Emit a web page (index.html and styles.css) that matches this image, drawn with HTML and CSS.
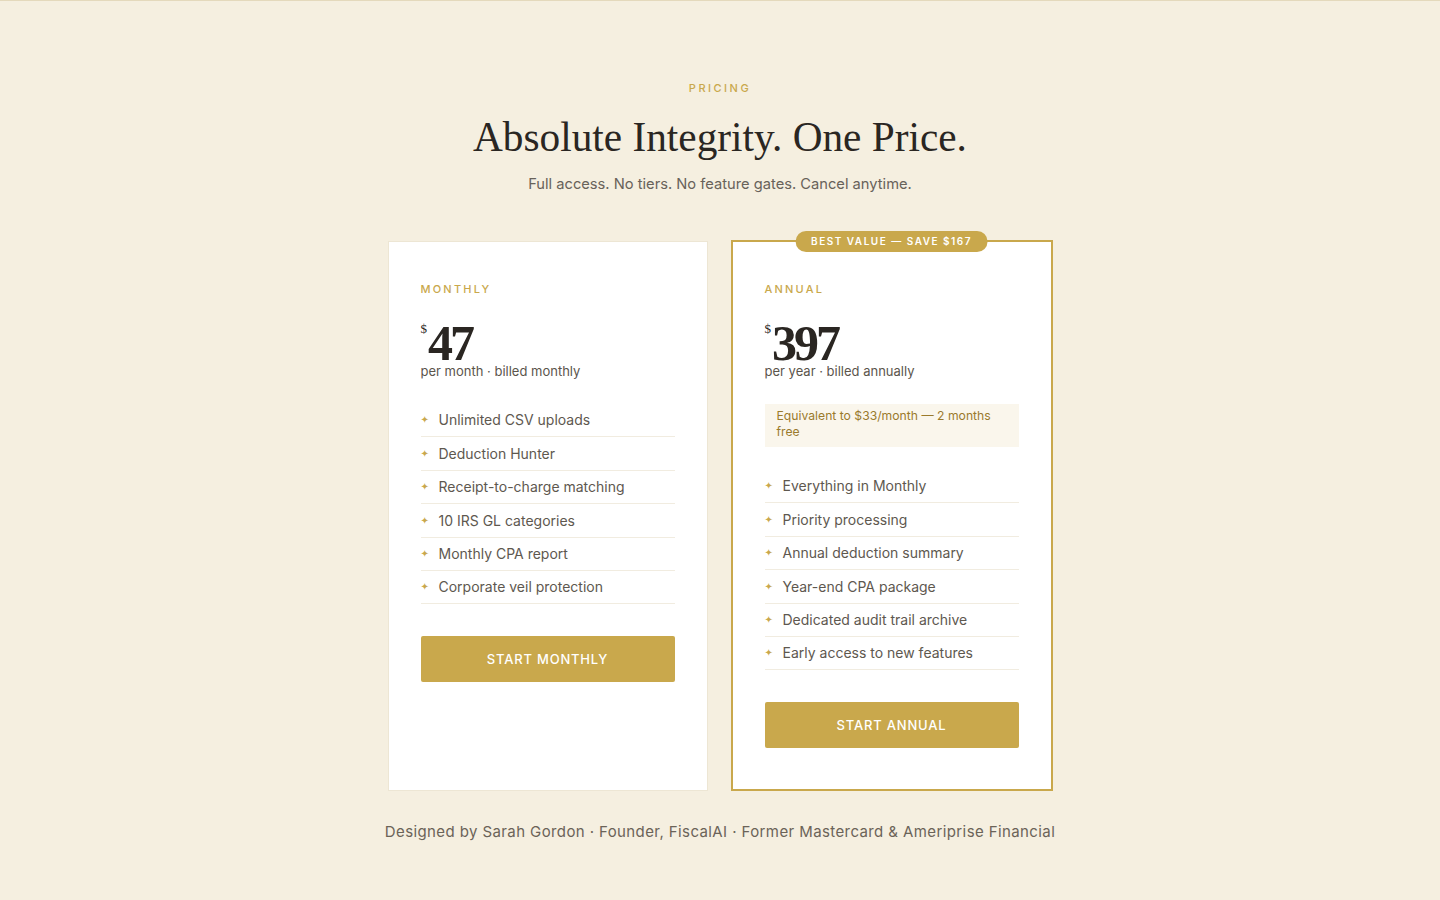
FILE: index.html
```html
<!DOCTYPE html>
<html lang="en">
<head>
<meta charset="utf-8">
<title>Pricing</title>
<link rel="stylesheet" href="styles.css">
</head>
<body>
<main class="pricing">
  <p class="eyebrow">PRICING</p>
  <h1 class="title">Absolute Integrity. One Price.</h1>
  <p class="subtitle">Full access. No tiers. No feature gates. Cancel anytime.</p>

  <div class="plans">
    <section class="card">
      <p class="plan-label">MONTHLY</p>
      <div class="price-block">
        <div class="price"><span class="currency">$</span><span class="amount">47</span></div>
        <p class="period">per month · billed monthly</p>
      </div>
      <ul class="features">
        <li><span class="plus">✦</span>Unlimited CSV uploads</li>
        <li><span class="plus">✦</span>Deduction Hunter</li>
        <li><span class="plus">✦</span>Receipt-to-charge matching</li>
        <li><span class="plus">✦</span>10 IRS GL categories</li>
        <li><span class="plus">✦</span>Monthly CPA report</li>
        <li><span class="plus">✦</span>Corporate veil protection</li>
      </ul>
      <a class="btn" href="#">START MONTHLY</a>
    </section>

    <section class="card card-featured">
      <span class="badge">BEST VALUE — SAVE $167</span>
      <p class="plan-label">ANNUAL</p>
      <div class="price-block">
        <div class="price"><span class="currency">$</span><span class="amount">397</span></div>
        <p class="period">per year · billed annually</p>
      </div>
      <p class="note">Equivalent to $33/month — 2 months free</p>
      <ul class="features">
        <li><span class="plus">✦</span>Everything in Monthly</li>
        <li><span class="plus">✦</span>Priority processing</li>
        <li><span class="plus">✦</span>Annual deduction summary</li>
        <li><span class="plus">✦</span>Year-end CPA package</li>
        <li><span class="plus">✦</span>Dedicated audit trail archive</li>
        <li><span class="plus">✦</span>Early access to new features</li>
      </ul>
      <a class="btn" href="#">START ANNUAL</a>
    </section>
  </div>

  <p class="credit">Designed by Sarah Gordon · Founder, FiscalAI · Former Mastercard &amp; Ameriprise Financial</p>
</main>
</body>
</html>
```

FILE: styles.css
```css
* { box-sizing: border-box; }

html, body {
  margin: 0;
  padding: 0;
}

body {
  background: #F5EFE0;
  border-top: 1px solid #E4D9BC;
  min-height: 900px;
  font-family: Inter, "Noto Sans", sans-serif;
  color: #5b554c;
}

.pricing {
  display: flex;
  flex-direction: column;
  align-items: center;
  padding-top: 79px;
}

.eyebrow {
  margin: 0;
  font-size: 11px;
  line-height: 16px;
  letter-spacing: 2.5px;
  color: #C9A84C;
  font-weight: 500;
}

.title {
  margin: 15px 0 0;
  font-family: "Liberation Serif", "DejaVu Serif", serif;
  font-weight: 400;
  font-size: 41.3px;
  line-height: 52px;
  color: #2A2622;
}

.subtitle {
  margin: 10px 0 0;
  font-size: 14.7px;
  line-height: 22px;
  color: #68625a;
}

.plans {
  display: grid;
  grid-template-columns: 320px 322px;
  gap: 23px;
  margin-top: 45px;
  align-items: stretch;
}

.card {
  position: relative;
  display: flex;
  flex-direction: column;
  background: #FFFFFF;
  border: 1px solid #EDE6D4;
  padding: 39px 32px 41px;
  margin-top: 1px;
}

.card-featured {
  border: 2px solid #C9A84C;
  margin-top: 0;
}

.badge {
  position: absolute;
  top: -11px;
  left: 50%;
  transform: translateX(-50%);
  white-space: nowrap;
  background: #C9A84C;
  color: #FFFFFF;
  font-size: 10px;
  font-weight: 600;
  letter-spacing: 1.5px;
  line-height: 21px;
  padding: 0 16px;
  border-radius: 11px;
}

.plan-label {
  margin: 0;
  font-size: 11px;
  line-height: 16px;
  letter-spacing: 2.2px;
  color: #C9A84C;
  font-weight: 500;
}

.price-block {
  margin-top: 28px;
}

.price {
  display: flex;
  align-items: flex-start;
  color: #2A2622;
  font-family: "Liberation Serif", "DejaVu Serif", serif;
  height: 37px;
}

.currency {
  font-size: 13px;
  line-height: 13px;
  margin-top: -3px;
  margin-right: 1px;
  color: #2A2622;
}

.amount {
  font-size: 50px;
  line-height: 37px;
  font-weight: 700;
  letter-spacing: -3px;
  color: #2A2622;
}

.period {
  margin: 0;
  font-size: 13px;
  line-height: 19px;
  color: #5b554c;
}

.note {
  margin: 23px 0 0;
  background: #FAF6EC;
  color: #9A7A2C;
  font-size: 12.2px;
  line-height: 16px;
  padding: 4px 12px 7px;
}

.features {
  list-style: none;
  margin: 23px 0 0;
  padding: 0;
}

.features li {
  display: flex;
  align-items: center;
  font-size: 14px;
  line-height: 19.6px;
  padding: 6.4px 0;
  border-bottom: 1px solid #F1ECE0;
  color: #5e584f;
}

.plus {
  width: 18px;
  color: #C9A84C;
  font-family: "DejaVu Sans", sans-serif;
  font-size: 10px;
  padding-left: 0;
}

.btn {
  display: block;
  margin-top: 32px;
  height: 46px;
  line-height: 46px;
  text-align: center;
  background: #C9A84C;
  color: #FFFFFF;
  text-decoration: none;
  font-size: 13px;
  font-weight: 500;
  letter-spacing: 0.8px;
  border-radius: 2px;
}

.credit {
  margin: 30px 0 0;
  font-size: 15px;
  line-height: 22px;
  letter-spacing: 0.4px;
  color: #6b6358;
}
```
